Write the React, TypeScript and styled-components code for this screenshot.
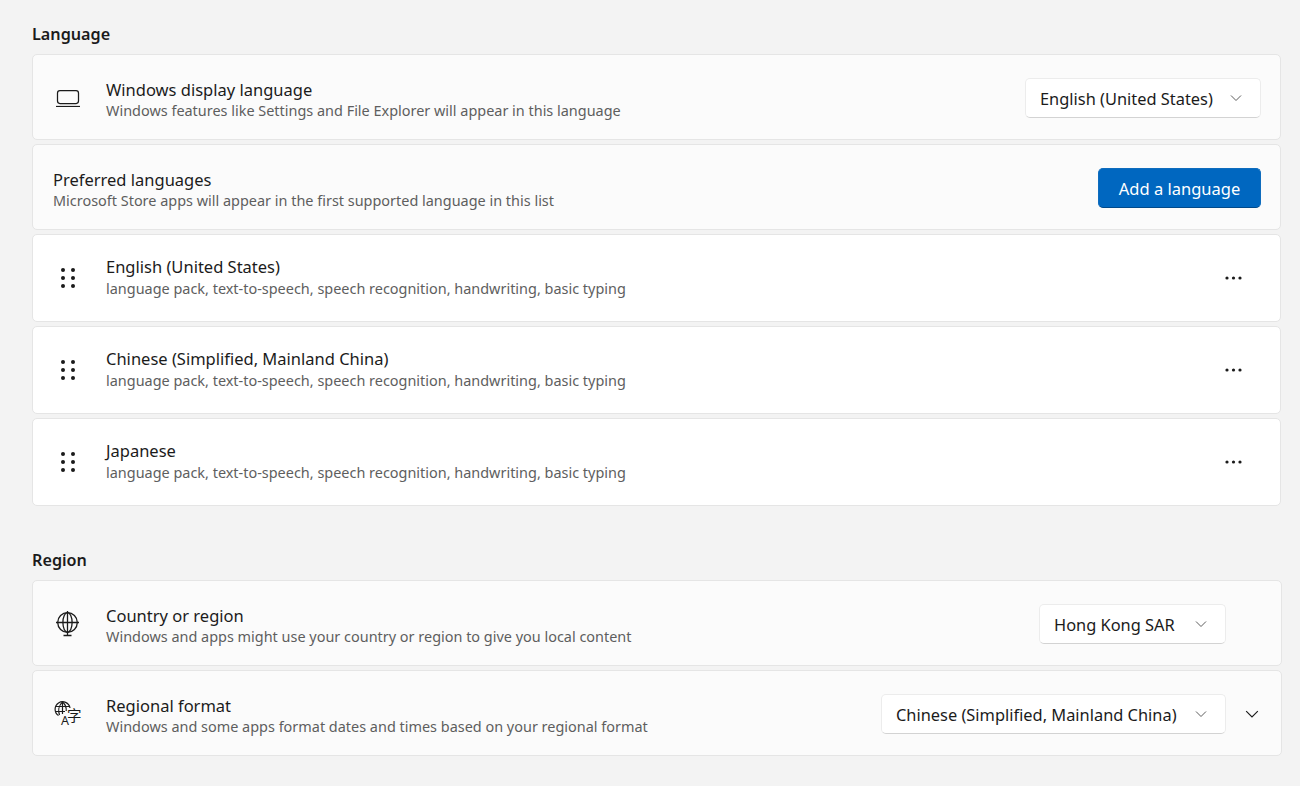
import styled, { createGlobalStyle } from 'styled-components'

const GlobalStyle = createGlobalStyle`
  html, body {
    margin: 0;
    padding: 0;
    background: #f3f3f3;
  }
  body {
    font-family: 'Noto Sans', 'Open Sans', 'Noto Sans CJK SC', sans-serif;
    color: #1b1b1b;
  }
`

const Chevron = ({ size = 12, color = '#5d5d5d' }: { size?: number; color?: string }) => (
  <svg width={size} height={size} viewBox="0 0 12 12" fill="none">
    <path d="M1 3.5 L6 8.5 L11 3.5" stroke={color} strokeWidth="1" />
  </svg>
)

const Dots = () => (
  <svg width="18" height="4" viewBox="0 0 18 4" fill="#1b1b1b">
    <circle cx="2" cy="2" r="1.6" />
    <circle cx="8.5" cy="2" r="1.6" />
    <circle cx="15" cy="2" r="1.6" />
  </svg>
)

const Gripper = () => (
  <svg width="14" height="20" viewBox="0 0 14 20" fill="#1b1b1b">
    {[2, 10, 18].map((cy) => (
      <g key={cy}>
        <circle cx="2" cy={cy} r="2" />
        <circle cx="12" cy={cy} r="2" />
      </g>
    ))}
  </svg>
)

const LaptopIcon = () => (
  <svg width="26" height="20" viewBox="0 0 26 20" fill="none" stroke="#1b1b1b" strokeWidth="1.25">
    <rect x="2.5" y="3.5" width="21" height="13" rx="2.4" />
    <path d="M1 19.5 H25" />
  </svg>
)

const GlobeIcon = () => (
  <svg width="27" height="27" viewBox="0 0 27 27" fill="none" stroke="#1b1b1b" strokeWidth="1.3">
    <circle cx="13.5" cy="12.5" r="9.8" />
    <ellipse cx="13.5" cy="12.5" rx="4.6" ry="9.8" />
    <path d="M2 12.5 H25 M13.5 1 V25.5 M9.5 25.5 H17.5" />
  </svg>
)

// tall viewBox keeps the two letters well inside the svg box
const LocaleIcon = () => (
  <svg width="30" height="34" viewBox="0 -4 30 34" fill="none" stroke="#1b1b1b" strokeWidth="1.2">
    <path d="M4.5 15.5 A7.5 7.5 0 1 1 16 8" />
    <path d="M5.5 15 C4 11 4.5 5.5 8.5 2 C12 5 12.5 8 12.2 11" />
    <path d="M1.5 6.5 H15.5 M1.5 11.5 H11 M8.5 2 V14" />
    <text x="7" y="25" fontSize="12.5" fontFamily="'Noto Sans'" fill="#1b1b1b" stroke="none">A</text>
    <text x="13" y="21" fontSize="14.5" fontFamily="'Noto Sans CJK SC'" fill="#1b1b1b" stroke="none">字</text>
  </svg>
)

const Page = styled.div`
  width: 1249px;
  margin-left: 32px;
  padding-bottom: 30px;
`

const SectionTitle = styled.h2<{ $gap?: number }>`
  margin: ${({ $gap }) => $gap ?? 0}px 0 0;
  height: 54px;
  display: flex;
  align-items: center;
  padding-top: 14px;
  box-sizing: border-box;
  font-size: 16.2px;
  font-weight: 600;
  color: #1b1b1b;
`

const CardList = styled.div`
  display: flex;
  flex-direction: column;
  gap: 4px;
`

const Card = styled.div<{ $white?: boolean; $wide?: boolean }>`
  box-sizing: border-box;
  width: ${({ $wide }) => ($wide ? 1250 : 1249)}px;
  height: ${({ $white }) => ($white ? 88 : 86)}px;
  display: flex;
  align-items: center;
  padding: 0 20px;
  background: ${({ $white }) => ($white ? '#ffffff' : '#fbfbfb')};
  border: 1px solid #e5e5e5;
  border-radius: 5px;
`

const IconSlot = styled.div<{ $inset: number }>`
  width: 53px;
  flex: none;
  display: flex;
  align-items: center;
  padding-left: ${({ $inset }) => $inset}px;
  box-sizing: border-box;
`

const TextBlock = styled.div<{ $low?: boolean }>`
  flex: 1;
  display: flex;
  flex-direction: column;
  gap: ${({ $low }) => ($low ? 0 : 1)}px;
  padding: ${({ $low }) => ($low ? '5px 0 0' : '0 0 1px')};
`

const RowTitle = styled.div`
  font-size: 16.5px;
  line-height: 22px;
  color: #1b1b1b;
`

const RowHint = styled.div`
  font-size: 14.45px;
  line-height: 20px;
  color: #5e5e5e;
`

const Dropdown = styled.div<{ $width: number; $flush?: boolean }>`
  box-sizing: border-box;
  width: ${({ $width }) => $width}px;
  height: 40px;
  flex: none;
  margin-top: 2px;
  margin-right: ${({ $flush }) => ($flush ? -1 : 0)}px;
  display: flex;
  align-items: center;
  justify-content: space-between;
  padding: 0 18px 0 14px;
  background: #ffffff;
  border: 1px solid #ececec;
  border-bottom-color: #d3d3d3;
  border-radius: 5px;
  font-size: 16.4px;
  color: #1b1b1b;
`

const AccentButton = styled.div`
  box-sizing: border-box;
  width: 163px;
  height: 40px;
  flex: none;
  margin-top: 2px;
  margin-right: -1px;
  display: flex;
  align-items: center;
  justify-content: center;
  background: #0067c0;
  border: 1px solid #0f6cbd;
  border-bottom-color: #00498a;
  border-radius: 5px;
  font-size: 16.5px;
  color: #ffffff;
`

const MoreButton = styled.div`
  width: 18px;
  margin-right: 17px;
  flex: none;
  display: flex;
`

const ExpandSlot = styled.div`
  width: 35px;
  margin-top: 2px;
  flex: none;
  display: flex;
  justify-content: flex-end;
  padding-right: 2px;
  box-sizing: border-box;
`

const languages = ['English (United States)', 'Chinese (Simplified, Mainland China)', 'Japanese']
const features = 'language pack, text-to-speech, speech recognition, handwriting, basic typing'

export default function App() {
  return (
    <Page>
      <GlobalStyle />
      <SectionTitle>Language</SectionTitle>
      <CardList>
        <Card>
          <IconSlot $inset={2}>
            <LaptopIcon />
          </IconSlot>
          <TextBlock $low>
            <RowTitle>Windows display language</RowTitle>
            <RowHint>Windows features like Settings and File Explorer will appear in this language</RowHint>
          </TextBlock>
          <Dropdown $width={236} $flush>
            English (United States)
            <Chevron />
          </Dropdown>
        </Card>
        <Card>
          <TextBlock $low>
            <RowTitle>Preferred languages</RowTitle>
            <RowHint>Microsoft Store apps will appear in the first supported language in this list</RowHint>
          </TextBlock>
          <AccentButton>Add a language</AccentButton>
        </Card>
        {languages.map((name) => (
          <Card $white key={name}>
            <IconSlot $inset={8}>
              <Gripper />
            </IconSlot>
            <TextBlock>
              <RowTitle>{name}</RowTitle>
              <RowHint>{features}</RowHint>
            </TextBlock>
            <MoreButton>
              <Dots />
            </MoreButton>
          </Card>
        ))}
      </CardList>
      <SectionTitle $gap={20}>Region</SectionTitle>
      <CardList>
        <Card $wide>
          <IconSlot $inset={1}>
            <GlobeIcon />
          </IconSlot>
          <TextBlock $low>
            <RowTitle>Country or region</RowTitle>
            <RowHint>Windows and apps might use your country or region to give you local content</RowHint>
          </TextBlock>
          <Dropdown $width={187}>
            Hong Kong SAR
            <Chevron />
          </Dropdown>
          <ExpandSlot />
        </Card>
        <Card $wide>
          <IconSlot $inset={1}>
            <LocaleIcon />
          </IconSlot>
          <TextBlock $low>
            <RowTitle>Regional format</RowTitle>
            <RowHint>Windows and some apps format dates and times based on your regional format</RowHint>
          </TextBlock>
          <Dropdown $width={345}>
            Chinese (Simplified, Mainland China)
            <Chevron />
          </Dropdown>
          <ExpandSlot>
            <Chevron size={14} color="#1b1b1b" />
          </ExpandSlot>
        </Card>
      </CardList>
    </Page>
  )
}
